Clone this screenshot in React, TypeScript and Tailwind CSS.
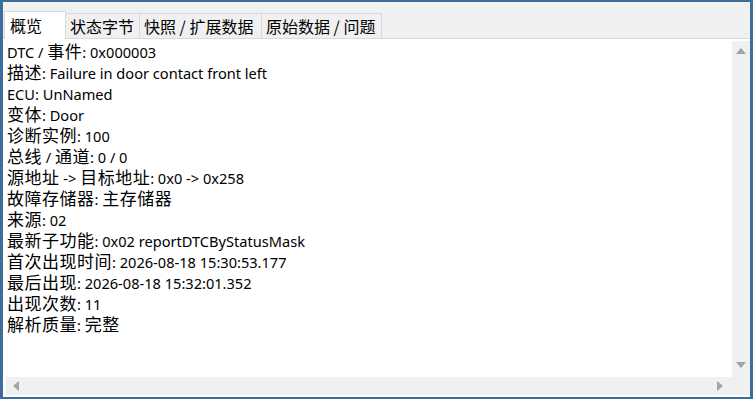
import React from "react";

const TABS = [
    { label: "概览", width: "w-[62px]", active: true },
    { label: "状态字节", width: "w-[74px]" },
    { label: "快照 / 扩展数据", width: "w-[122px]" },
    { label: "原始数据 / 问题", width: "w-[120px]" },
];

const LINES = [
    "DTC / 事件: 0x000003",
    "描述: Failure in door contact front left",
    "ECU: UnNamed",
    "变体: Door",
    "诊断实例: 100",
    "总线 / 通道: 0 / 0",
    "源地址 -> 目标地址: 0x0 -> 0x258",
    "故障存储器: 主存储器",
    "来源: 02",
    "最新子功能: 0x02 reportDTCByStatusMask",
    "首次出现时间: 2026-08-18 15:30:53.177",
    "最后出现: 2026-08-18 15:32:01.352",
    "出现次数: 11",
    "解析质量: 完整",
];

const CJK = /([\u3000-\u9fff\uff00-\uffef]+)/;

function Line({ text }: { text: string }) {
    const parts = text.split(CJK);
    return (
        <div className="h-[21px] leading-[21px] whitespace-pre">
            {parts.map((p, i) =>
                i % 2 === 1 ? (
                    <span key={i} className="text-[17px] tracking-[0.5px] font-['Noto_Sans_CJK_SC',sans-serif] leading-none">
                        {p}
                    </span>
                ) : (
                    <span key={i} className="leading-none">{p}</span>
                )
            )}
        </div>
    );
}

function Arrow({ dir }: { dir: "up" | "down" | "left" | "right" }) {
    const pts = {
        up: "0,6 5,0 10,6",
        down: "0,0 5,6 10,0",
        left: "6,0 0,5 6,10",
        right: "0,0 6,5 0,10",
    }[dir];
    const vertical = dir === "up" || dir === "down";
    return (
        <svg width={vertical ? 10 : 6} height={vertical ? 6 : 10} viewBox={vertical ? "0 0 10 6" : "0 0 6 10"}>
            <polygon points={pts} fill="#a3a3a3" />
        </svg>
    );
}

export default function App() {
    return (
        <div className="w-[753px] h-[399px] border-l-[3px] border-r-[3px] border-t-2 border-b-2 border-[#3e6d9c] bg-[#f0f0f0] flex flex-col font-['Noto_Sans','Noto_Sans_CJK_SC',sans-serif] text-black">
            {/* Tabs */}
            <div className="h-[36px] flex items-end pl-px shrink-0">
                {TABS.map((t) =>
                    t.active ? (
                        <div
                            key={t.label}
                            className={`${t.width} h-[28px] -mb-px z-10 bg-white border border-b-0 border-[#d9d9d9] flex items-center pl-[5px] text-[16px] pb-[2px] font-['Noto_Sans_CJK_SC',sans-serif]`}
                        >
                            {t.label}
                        </div>
                    ) : (
                        <div
                            key={t.label}
                            className={`${t.width} h-[25px] bg-[#f0f0f0] border border-l-0 border-b-0 border-[#d9d9d9] flex items-center pl-[4px] text-[16px] whitespace-pre font-['Noto_Sans_CJK_SC',sans-serif]`}
                        >
                            {t.label}
                        </div>
                    )
                )}
            </div>

            {/* Panel */}
            <div className="flex-1 min-h-0 bg-white border-t border-[#d9d9d9] pl-[3px] pt-[2px] pb-[2px] flex flex-col">
                <div className="flex-1 min-h-0 flex">
                    <div className="flex-1 pl-px pt-px text-[14.6px]">
                        {LINES.map((l) => (
                            <Line key={l} text={l} />
                        ))}
                    </div>
                    <div className="w-[18px] bg-[#f0f0f0] flex flex-col items-center justify-between pt-[7px] pb-[9px]">
                        <Arrow dir="up" />
                        <Arrow dir="down" />
                    </div>
                </div>
                <div className="h-[18px] flex shrink-0">
                    <div className="flex-1 bg-[#f0f0f0] flex items-center justify-between pl-[7px] pr-[9px]">
                        <Arrow dir="left" />
                        <Arrow dir="right" />
                    </div>
                    <div className="w-[18px] bg-[#f0f0f0]" />
                </div>
            </div>
        </div>
    );
}
